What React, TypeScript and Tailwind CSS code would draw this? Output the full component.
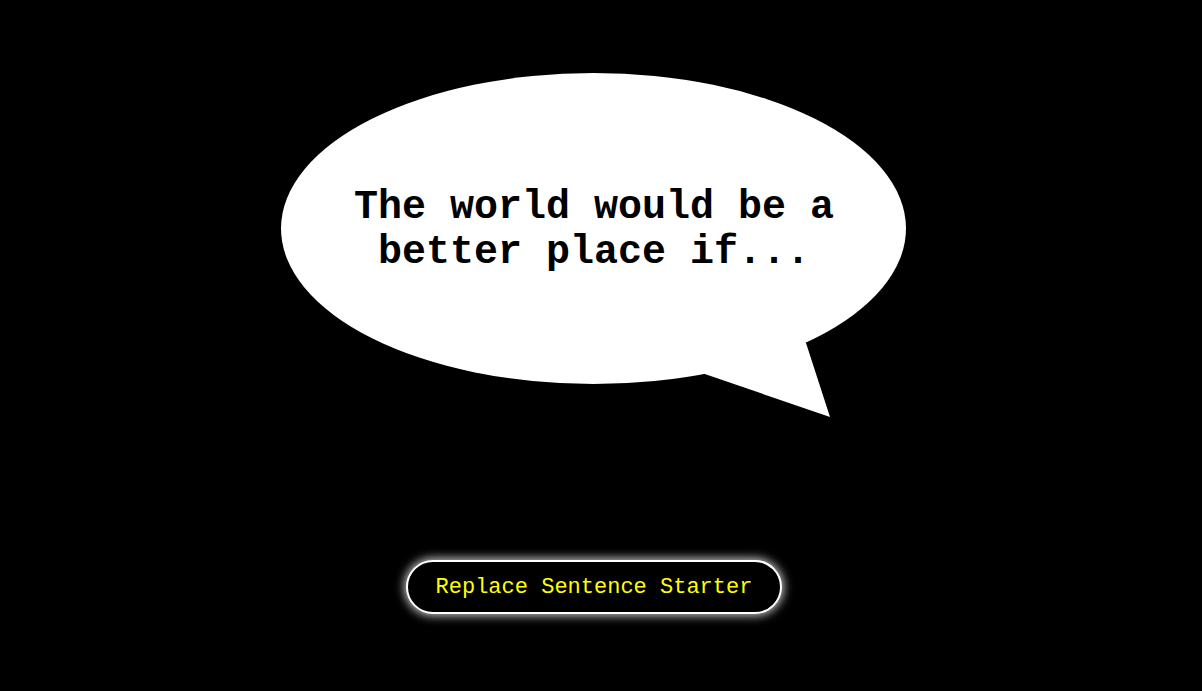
import React from "react";

function SpeechBubble({ text }: { text: string }) {
  return (
    <div className="relative w-[626px] h-[344px]">
      {/* bubble drawing */}
      <svg width="626" height="344" viewBox="0 0 626 344" className="block">
        <ellipse cx="312.5" cy="155.5" rx="312.5" ry="155.5" fill="#ffffff" />
        <polygon points="415,298 549,344 525,270 480,250" fill="#ffffff" />
      </svg>

      <p className="absolute inset-x-0 top-[112px] text-center font-['Liberation_Mono','Courier_New',monospace] text-[40px] leading-[45px] font-bold text-black px-[60px]">
        {text}
      </p>
    </div>
  );
}

export default function App() {
  const starters = [
    "The world would be a better place if...",
    "If I could change one thing, it would be...",
    "The best day of my life was when...",
  ];
  const [idx, setIdx] = React.useState(0);

  return (
    <main className="min-h-screen bg-black flex flex-col items-center pt-[73px] pr-[14px]">
      <SpeechBubble text={starters[idx]} />

      <button
        onClick={() => setIdx((i) => (i + 1) % starters.length)}
        className="mt-[143px] h-[54px] px-[28px] rounded-full border-2 border-white bg-black text-[#ffff00] font-['Liberation_Mono','Courier_New',monospace] text-[22px] shadow-[0_0_10px_2px_rgba(255,255,255,0.75)]"
      >
        Replace Sentence Starter
      </button>
    </main>
  );
}
